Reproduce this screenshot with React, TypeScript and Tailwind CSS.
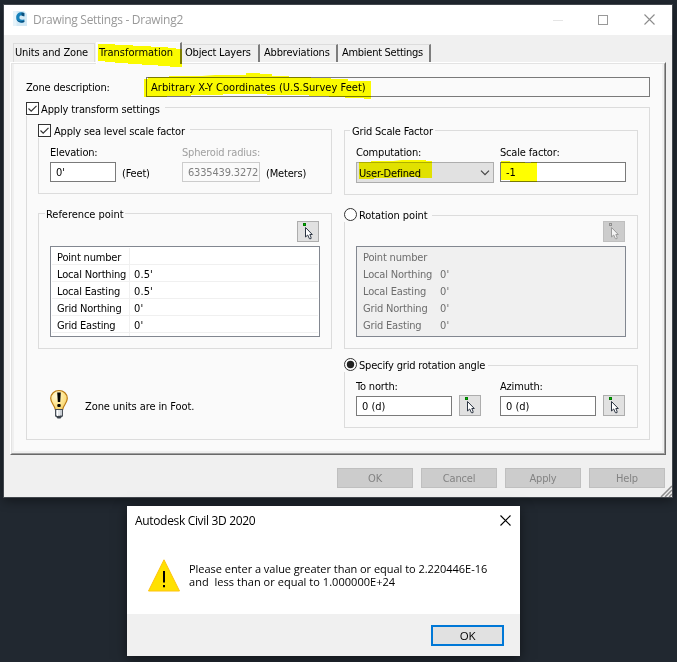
import React from 'react';

type Row = { label: string; value: string };

const tabs = [
    { label: 'Units and Zone', className: 'w-[82px] pl-px border-r border-r-[#dcdcdc]' },
    { label: 'Object Layers', className: 'w-[77px] pl-[2px] border-r-2 border-r-[#7d7d7d]' },
    { label: 'Abbreviations', className: 'w-[77px] pl-[3px] border-r-2 border-r-[#7d7d7d]' },
    { label: 'Ambient Settings', className: 'w-[92px] pl-[3px] border-r-2 border-r-[#7d7d7d] tracking-[-0.28px]' },
];

const referenceRows: Row[] = [
    { label: 'Point number', value: '' },
    { label: 'Local Northing', value: "0.5'" },
    { label: 'Local Easting', value: "0.5'" },
    { label: 'Grid Northing', value: "0'" },
    { label: 'Grid Easting', value: "0'" },
];

const rotationRows: Row[] = referenceRows.map((row, i) => ({ ...row, value: i === 0 ? '' : "0'" }));

const Logo = () => (
    <svg width="16" height="16" viewBox="0 0 16 16">
        <path d="M1 0h11l3 3v12H1z" fill="#d3e9f5" />
        <path d="M1 0h3.500v15H1z" fill="#e6f3fa" />
        <path d="M12.300 2C8 .2 4.200 2.400 4.200 6.500c0 4.200 3.800 6.300 8.100 4.500V8.200C10 9.300 7.400 8.800 7.400 6.500S9.800 3.600 12.300 4.900z" fill="#1681bb" />
        <path d="M9.500 1.400l2.800.6v3.400l-2.800-.9zM4.600 8.500c1.200 2.600 4.400 3.800 7.700 2.500V9.600c-3 1.400-6 .9-7.700-1.100z" fill="#0a4f7c" />
    </svg>
);

const PickIcon: React.FC<{ disabled?: boolean }> = ({ disabled }) => (
    <svg width="20" height="19" viewBox="0 0 20 19">
        <rect x="5.500" y="1.500" width="2" height="2" fill={disabled ? '#cccccc' : '#00c800'} stroke={disabled ? '#8f8f8f' : '#007a00'} />
        <path
            d="M7.500 5.500v9.500l2.200-2 1.700 3.700h1.600v-1.500l-1.200-2.700h2.500z"
            fill={disabled ? '#f4f4f4' : '#ffffff'}
            stroke={disabled ? '#9a9a9a' : '#2b3442'}
            strokeWidth="1"
        />
    </svg>
);

const PickButton: React.FC<{ disabled?: boolean }> = ({ disabled }) => (
    <button
        className={`w-[22px] h-[21px] shrink-0 border ${disabled ? 'bg-[#cccccc] border-[#bfbfbf]' : 'bg-[#e1e1e1] border-[#adadad]'}`}
    >
        <PickIcon disabled={disabled} />
    </button>
);

const Bulb = () => (
    <svg width="20" height="31" viewBox="0 0 20 31">
        <defs>
            <radialGradient id="glass" cx="0.35" cy="0.3" r="0.8">
                <stop offset="0" stopColor="#fff8d8" />
                <stop offset="0.5" stopColor="#ffe795" />
                <stop offset="1" stopColor="#f6cf62" />
            </radialGradient>
        </defs>
        <path d="M9 1.500C4.500 1.500.7 4.900.7 9.300c0 5 4 6.700 4.600 11.200h7.400c.6-4.500 4.600-6.200 4.600-11.200 0-4.400-3.800-7.800-8.300-7.800z" fill="url(#glass)" stroke="#b97a14" strokeWidth="1.200" />
        <path d="M7.200 3.500h3.600L10.200 13H7.800z" fill="#000" />
        <rect x="7.300" y="15" width="3.400" height="3" rx="1" fill="#000" />
        <rect x="5.500" y="20.500" width="7" height="6.500" fill="#c9ced4" stroke="#4a5058" />
        <path d="M7.500 21v6M9 21v6" stroke="#ffffff" strokeWidth="1" />
        <path d="M5.500 27h7l-2 2.500h-3z" fill="#3c434c" />
    </svg>
);

const CheckBox = () => (
    <svg width="13" height="13" viewBox="0 0 13 13">
        <rect x="0.500" y="0.500" width="12" height="12" fill="#fff" stroke="#333" />
        <path d="M2.500 6.500l2.700 2.700 5.300-5.400" fill="none" stroke="#333" strokeWidth="1.200" />
    </svg>
);

const Radio: React.FC<{ checked?: boolean }> = ({ checked }) => (
    <svg width="13" height="13" viewBox="0 0 13 13">
        <circle cx="6.500" cy="6.500" r="6" fill="#fff" stroke="#333" />
        {checked && <circle cx="6.500" cy="6.500" r="3.700" fill="#222" />}
    </svg>
);

const Group: React.FC<{ legend: React.ReactNode; legendClass: string; className: string; children: React.ReactNode }> = ({
    legend,
    legendClass,
    className,
    children,
}) => (
    <section className={`relative border border-[#dcdcdc] ${className}`}>
        <div className={`absolute flex items-center bg-[#fafafa] whitespace-nowrap leading-[14px] ${legendClass}`}>{legend}</div>
        {children}
    </section>
);

const Field: React.FC<{ label: string; value: string; className: string; disabled?: boolean }> = ({ label, value, className, disabled }) => (
    <label className={`flex flex-col gap-px shrink-0 whitespace-nowrap leading-[16px] ${disabled ? 'text-[#a0a0a0]' : ''} ${className}`}>
        <span>{label}</span>
        <span
            className={`h-5 border pl-[5px] leading-[19px] ${disabled ? 'bg-[#fafafa] border-[#cccccc] text-[#808080]' : 'bg-white border-[#7a7a7a] tracking-normal'}`}
        >
            {value}
        </span>
    </label>
);

const PointTable: React.FC<{ rows: Row[]; disabled?: boolean }> = ({ rows, disabled }) => (
    <div
        className={`mt-1 w-[270px] h-[91px] border border-[#828790] px-px pt-px leading-[20px] ${disabled ? 'bg-[#f0f0f0] text-[#6d6d6d]' : 'bg-white'}`}
    >
        {rows.map(row => (
            <div key={row.label} className={`flex h-[17px] border-b ${disabled ? 'border-transparent' : 'border-[#f0f0f0]'}`}>
                <span className={`pl-[5px] w-[78px] border-r ${disabled ? 'border-transparent' : 'border-[#f0f0f0]'}`}>{row.label}</span>
                <span className="pl-1 tracking-[0.1px]">{row.value}</span>
            </div>
        ))}
        {!disabled && <div className="w-[78px] h-[3px] border-r border-[#f0f0f0]" />}
    </div>
);

const CloseIcon: React.FC<{ color: string }> = ({ color }) => (
    <svg width="11" height="11" viewBox="0 0 11 11">
        <path d="M.5.5l10 10M10.500.5l-10 10" stroke={color} strokeWidth="1.100" />
    </svg>
);

export default function App() {
    return (
        <div className="relative w-[677px] h-[662px] overflow-hidden bg-[#212830] pl-[3px] pt-1 font-['DejaVu_Sans_Condensed','DejaVu_Sans',sans-serif] text-[11px] tracking-[-0.18px] text-black">
            {/* Settings window */}
            <div className="w-[670px] h-[494px] border border-[#42474d] bg-[#f0f0f0] shadow-[0_3px_10px_rgba(0,0,0,0.4)]">
                <header className="h-[30px] flex items-center bg-white pl-2 pr-[17px] font-['Open_Sans',sans-serif] text-[12px] text-[#999999]">
                    <div className="-mt-[2px]"><Logo /></div>
                    <span className="ml-[5px] tracking-[-0.28px]">Drawing Settings - Drawing2</span>
                    <div className="ml-auto flex items-center">
                        <div className="w-[10px] h-px bg-[#e5e5e5]" />
                        <div className="ml-[35px] w-[10px] h-[10px] -mt-px border border-[#999999]" />
                        <div className="ml-9 -mt-[2px]"><CloseIcon color="#8c8c8c" /></div>
                    </div>
                </header>

                {/* Tabs */}
                <nav className="h-[27px] flex items-end pl-[9px] whitespace-nowrap leading-[17px]">
                    <div className={`h-[19px] border-t border-l border-t-[#dcdcdc] border-l-[#dcdcdc] ${tabs[0].className}`}>{tabs[0].label}</div>
                    <div className="relative z-10 ml-px h-[22px] -mb-[2px] w-[86px] border-t border-l border-white border-r-2 border-r-[#7d7d7d] bg-[#fafafa] pl-[2px] leading-[19px] tracking-normal">
                        Transformation
                    </div>
                    {tabs.slice(1).map(tab => (
                        <div key={tab.label} className={`ml-px h-[18px] border-t border-t-[#dcdcdc] leading-[15px] ${tab.className}`}>
                            {tab.label}
                        </div>
                    ))}
                </nav>

                {/* Tab page */}
                <div className="ml-[6px] w-[656px] h-[393px] border border-t-white border-l-white border-r-[#696969] border-b-[#696969]">
                    <div className="h-full border border-t-[#e3e3e3] border-l-[#e3e3e3] border-r-[#a0a0a0] border-b-[#a0a0a0]">
                        <div className="h-full border-x-2 border-b-2 border-[#f0f0f0] bg-[#fafafa] px-3 pt-[13px]">
                            <div className="flex h-5">
                                <span className="w-[120px] leading-[22px]">Zone description:</span>
                                <div className="flex-1 border border-[#7a7a7a] pl-1 leading-[20px] tracking-[0.03px]">Arbitrary X-Y Coordinates (U.S.Survey Feet)</div>
                            </div>

                            <Group
                                legend={<><CheckBox /><span className="ml-[2px] mt-[2px] tracking-[-0.14px]">Apply transform settings</span></>}
                                legendClass="-left-px top-[-7px] h-[15px] pr-[5px]"
                                className="mt-[10px] h-[333px] px-[11px] flex gap-3"
                            >
                                <div className="w-[294px] pt-[21px]">
                                    <Group
                                        legend={<><CheckBox /><span className="ml-[3px] mt-[2px]">Apply sea level scale factor</span></>}
                                        legendClass="-left-px top-[-7px] h-[15px] pr-[5px]"
                                        className="h-[65px] flex items-start pl-[11px] pt-[15px]"
                                    >
                                        <Field label="Elevation:" value="0'" className="w-[66px]" />
                                        <span className="ml-[6px] w-[60px] mt-[21px] leading-[16px]">(Feet)</span>
                                        <Field label="Spheroid radius:" value="6335439.3272" className="w-[78px]" disabled />
                                        <span className="ml-[6px] mt-[21px] leading-[16px]">(Meters)</span>
                                    </Group>

                                    <Group
                                        legend="Reference point"
                                        legendClass="left-[6px] top-[-6px] px-px h-[14px] tracking-[-0.04px]"
                                        className="mt-[19px] h-[136px] pl-[11px] pr-3 pt-[7px]"
                                    >
                                        <div className="flex justify-end"><PickButton /></div>
                                        <PointTable rows={referenceRows} />
                                    </Group>

                                    <div className="mt-10 ml-3 flex">
                                        <Bulb />
                                        <span className="ml-[15px] mt-[11px] leading-[14px] tracking-[-0.1px]">Zone units are in Foot.</span>
                                    </div>
                                </div>

                                <div className="w-[294px] pt-[22px]">
                                    <Group
                                        legend="Grid Scale Factor"
                                        legendClass="left-[5px] top-[-6px] px-[2px] h-[14px]"
                                        className="h-[65px] flex gap-[6px] pl-[11px] pt-[14px]"
                                    >
                                        <div className="w-[138px] flex flex-col gap-px leading-[16px]">
                                            <span>Computation:</span>
                                            <div className="h-[21px] border border-[#adadad] bg-[#e1e1e1] flex items-center justify-between pl-[2px] pr-[3px]">
                                                <span className="mt-[2px]">User-Defined</span>
                                                <svg width="10" height="6" viewBox="0 0 10 6">
                                                    <path d="M1 .7l4 4 4-4" fill="none" stroke="#444" strokeWidth="1.200" />
                                                </svg>
                                            </div>
                                        </div>
                                        <Field label="Scale factor:" value="-1" className="w-[126px]" />
                                    </Group>

                                    <Group
                                        legend={<><Radio /><span className="ml-[2px] mt-[3px] tracking-[-0.08px]">Rotation point</span></>}
                                        legendClass="-left-px top-[-9px] h-[15px] pr-[4px]"
                                        className="mt-5 h-[134px] pl-[11px] pr-3 pt-[5px]"
                                    >
                                        <div className="flex justify-end"><PickButton disabled /></div>
                                        <PointTable rows={rotationRows} disabled />
                                    </Group>

                                    <Group
                                        legend={<><Radio checked /><span className="ml-[2px] mt-[3px]">Specify grid rotation angle</span></>}
                                        legendClass="-left-px top-[-9px] h-[15px] pr-[3px]"
                                        className="mt-4 h-[63px] flex items-start pl-[11px] pt-[13px]"
                                    >
                                        <Field label="To north:" value="0 (d)" className="w-[96px]" />
                                        <div className="ml-[7px] mr-[19px] mt-4 flex"><PickButton /></div>
                                        <Field label="Azimuth:" value="0 (d)" className="w-[96px]" />
                                        <div className="ml-[7px] mt-4 flex"><PickButton /></div>
                                    </Group>
                                </div>
                            </Group>
                        </div>
                    </div>
                </div>

                {/* Disabled window buttons */}
                <footer className="mt-[13px] flex justify-end gap-2 pr-[7px]">
                    {['OK', 'Cancel', 'Apply', 'Help'].map(label => (
                        <button key={label} className="w-[76px] h-5 border border-[#bfbfbf] bg-[#cccccc] leading-[20px] text-[#838383]">
                            {label}
                        </button>
                    ))}
                </footer>
            </div>

            {/* Resize grip */}
            <svg className="absolute left-[660px] top-[485px]" width="12" height="12" viewBox="0 0 12 12">
                <path d="M1 12L12 1M5 12l7-7M9 12l3-3" stroke="#8c8c8c" strokeWidth="1.500" />
            </svg>

            {/* Yellow marker strokes */}
            <svg className="absolute z-20 left-0 top-0 mix-blend-multiply pointer-events-none" width="677" height="200" viewBox="0 0 677 200" fill="#ffff00">
                <path d="M98 44h17v1h18v1h18v1h17v1h8v1h6v18h-12v-1h-12v-1h-16v-1h-14v-1h-13v-1h-10v-1h-7z" />
                <path d="M144 79h4v-2h21v-1h33l13-1h31v-2h14v1h12v2h17v1h22v1h20v1h17v2h23v18h-7v-1h-19v-1h-16v-1h-20v-1h-42v-1h-44v1h-32v1h-24v1h-23z" />
                <path d="M359 162h12v-1h22l9-1h24v1h6v17h-14v-1h-9l-20 1h-15v1h-15z" />
                <path d="M501 161h9v1h15v1h6v-1h6v20h-27v-2h-9z" />
            </svg>

            {/* Error message box */}
            <div className="absolute left-[127px] top-[506px] w-[393px] h-[150px] flex flex-col bg-white font-['Open_Sans',sans-serif] shadow-[0_3px_12px_rgba(0,0,0,0.5)]">
                <div className="flex items-center h-7 pl-2 pr-[9px] text-[12px]">
                    <span className="mt-[1px] tracking-[-0.33px]">Autodesk Civil 3D 2020</span>
                    <span className="ml-auto"><CloseIcon color="#000" /></span>
                </div>
                <div className="flex-1 flex items-start pl-[21px] pt-[25px]">
                    <svg width="32" height="33" viewBox="0 0 32 33">
                        <path d="M16 .8L31.500 32H.5z" fill="#ffe100" stroke="#ffc20e" />
                        <path d="M15 12h2v11.500h-2zM15 26h2v2.200h-2z" fill="#000" />
                    </svg>
                    <div className="ml-[9px] mt-[3px] text-[11px] leading-[13px] whitespace-pre">
                        <p className="tracking-[-0.03px]">Please enter a value greater than or equal to 2.220446E-16</p>
                        <p className="tracking-[0.04px]">{'and  less than or equal to 1.000000E+24'}</p>
                    </div>
                </div>
                <div className="h-[42px] bg-[#f0f0f0] flex justify-end pt-[11px] pr-4">
                    <button className="w-[73px] h-[21px] border-2 border-[#0078d7] bg-[#e1e1e1] text-[11.500px] leading-[18px]">OK</button>
                </div>
            </div>
        </div>
    );
}
